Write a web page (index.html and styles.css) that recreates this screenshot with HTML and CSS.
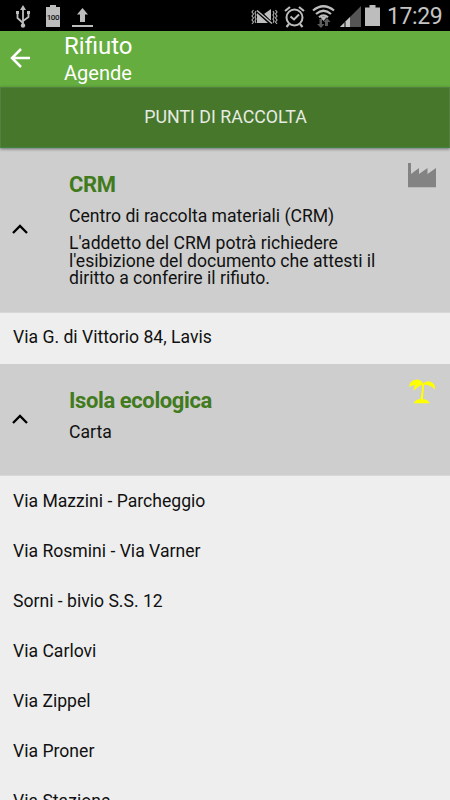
FILE: index.html
```html
<!DOCTYPE html>
<html lang="it">
<head>
<meta charset="utf-8">
<title>Rifiuto - Agende</title>
<link rel="stylesheet" href="styles.css">
</head>
<body>
<div class="screen">
  <div class="status">
    <svg class="usb" width="16" height="24" viewBox="0 0 16 24" fill="none" stroke="#bdbdbd" stroke-width="1.800"><path d="M8 3v19M2.500 8v5L8 18M13.500 8v4L8 16"/><path d="M8 0l3 5H5zM1 6h3v3H1zM12 6h3v3h-3z" fill="#bdbdbd" stroke="none"/><circle cx="8" cy="20.500" r="2.200" fill="#bdbdbd" stroke="none"/></svg>
    <div class="level"><span>100</span></div>
    <svg class="upload" width="22" height="20" viewBox="0 0 22 20" fill="#bdbdbd"><path d="M10.500 0L16 6.500h-3V14H8V6.500H5zM0 17h21v2H0z"/></svg>
    <svg class="mute" width="27" height="18" viewBox="0 0 27 18"><path d="M2.500 2l-1.500 2 1.500 2L1 8l1.500 2L1 12l1.500 2L1 16M5 3L4 5l1 2-1 2 1 2-1 2 1 2M22 3l1 2-1 2 1 2-1 2 1 2-1 2M24.500 2l1.500 2-1.500 2L26 8l-1.500 2 1.500 2-1.500 2 1.500 2" fill="none" stroke="#a8a8a8" stroke-width="1.200"/><path d="M6 5l11 10H6zM13 6l7-5v13z" fill="#bdbdbd"/><path d="M6 1.500l15 14" stroke="#000" stroke-width="3"/><path d="M6 2.500l15 13" stroke="#bdbdbd" stroke-width="1.500"/></svg>
    <svg class="alarm" width="21" height="22" viewBox="0 0 21 22" fill="none" stroke="#bdbdbd"><circle cx="10.500" cy="11.500" r="8" stroke-width="2"/><path d="M6.500 10.500l3.500 3 5-5" stroke-width="2"/><path d="M1 5l5-4M20 5l-5-4M5 18l-2.500 3M16 18l2.500 3" stroke-width="2.200"/></svg>
    <svg class="wifi" width="24" height="23" viewBox="0 0 24 23" fill="none" stroke="#bdbdbd" stroke-width="2.200"><path d="M1 5.500q10.500-8.500 21 0M4 9q7.500-6.500 15 0M7 12.300q4.500-4 9 0"/><path d="M8.500 12.500q3-2 6 0l-3 3.500z" fill="#bdbdbd" stroke="none"/><path d="M7.500 14v5H5l4 4 3.500-4H10v-5zM13 21v-4h-1.500l3.500-4 3.500 4H16v4z" fill="#5b5b5b" stroke="none"/></svg>
    <svg class="signal" width="21" height="21" viewBox="0 0 21 21"><path d="M0 21L21 0v21z" fill="#555"/><path d="M0 21l10-10v10z" fill="#c4c4c4"/><path d="M5 16v5" stroke="#000"/></svg>
    <svg class="cell" width="15" height="21" viewBox="0 0 15 21"><path d="M0 2.500h4.500V0h6v2.500H15V21H0z" fill="#bdbdbd"/></svg>
    <span class="clock">17:29</span>
  </div>
  <header class="bar">
    <svg class="back" width="20" height="20" viewBox="0 0 20 20" fill="none" stroke="#fff" stroke-width="2.500"><path d="M11 1L2 10l9 9M2 10h18"/></svg>
    <div class="titles"><h1>Rifiuto</h1><p>Agende</p></div>
  </header>
  <div class="action">PUNTI DI RACCOLTA</div>
  <section class="group first">
    <svg class="chevron" width="16" height="10" viewBox="0 0 16 10"><path d="M1 9l7-7 7 7" fill="none" stroke="#000" stroke-width="2.300"/></svg>
    <div class="info">
      <h2>CRM</h2>
      <p class="kind">Centro di raccolta materiali (CRM)</p>
      <p class="note">L'addetto del CRM potrà richiedere<br>l'esibizione del documento che attesti il<br>diritto a conferire il rifiuto.</p>
    </div>
    <svg class="factory" width="29" height="25" viewBox="0 0 29 25"><path d="M0 0h3v11l8-6v6l8.500-6v6L28 5v19.300H0z" fill="#838383"/></svg>
  </section>
  <div class="row single">Via G. di Vittorio 84, Lavis</div>
  <section class="group second">
    <svg class="chevron" width="16" height="10" viewBox="0 0 16 10"><path d="M1 9l7-7 7 7" fill="none" stroke="#000" stroke-width="2.300"/></svg>
    <div class="info">
      <h2>Isola ecologica</h2>
      <p class="kind">Carta</p>
    </div>
    <svg class="palm" width="27" height="26" viewBox="0 0 27 26" fill="#ff0"><path d="M14.500 4.500C12 .5 8.500-.2 5.500 1 2 2 0 5 .3 8.300Q3 6 6.500 6.300 4 8.500 4.800 11.800 8.500 7.200 13.400 5.800z"/><path d="M14.500 4.200Q18 1.600 21.500 2.700 26.500 4.500 26 10.500 22 6 15 5.600z"/><path d="M13.200 5h2L13.800 20.500h-2.500Q13 13 13.200 5z"/><path d="M4.500 24.300Q6.500 20 12.500 20t8.500 4.300z"/></svg>
  </section>
  <div class="list">
    <div class="row">Via Mazzini - Parcheggio</div>
    <div class="row">Via Rosmini - Via Varner</div>
    <div class="row">Sorni - bivio S.S. 12</div>
    <div class="row">Via Carlovi</div>
    <div class="row">Via Zippel</div>
    <div class="row">Via Proner</div>
    <div class="row">Via Stazione</div>
  </div>
</div>
</body>
</html>
```
FILE: styles.css
```css
* { box-sizing: border-box; }
body, h1, h2, p { margin: 0; font-weight: 400; }
body { font-family: Roboto, "Noto Sans", sans-serif; color: #111; background: #eee; overflow: hidden; }
svg { display: block; flex: none; }
.screen { width: 450px; height: 800px; overflow: hidden; display: flex; flex-direction: column; }
.screen > * { flex: none; }
.status { height: 31px; background: #000; display: flex; align-items: flex-start; padding-left: 15px; }
.usb { margin-top: 5px; }
.level { width: 14px; height: 20px; margin: 7px 0 0 15px; background: #bdbdbd; position: relative; display: flex; align-items: center; justify-content: center; font-size: 8px; letter-spacing: -.3px; font-weight: 500; color: #111; }
.level::before { content: ""; position: absolute; top: -2px; left: 4px; width: 6px; height: 2px; background: #bdbdbd; }
.upload { margin: 8px 0 0 12px; }
.mute { margin: 8px 0 0 157px; }
.alarm { margin: 6px 0 0 6px; }
.wifi { margin: 5px 0 0 7px; }
.signal { margin: 6px 0 0 4px; }
.cell { margin: 5px 0 0 4px; }
.clock { margin-left: 7px; font-size: 23px; line-height: 33px; color: #c4c4c4; letter-spacing: -.4px; white-space: nowrap; }
.bar { height: 56px; background: #64ad3e; display: flex; color: #fff; padding-left: 10px; }
.back { margin-top: 17px; }
.titles { margin-left: 34px; }
.titles h1 { font-size: 24px; line-height: 28px; margin-top: 1px; }
.titles p { font-size: 20px; line-height: 26px; }
.action { height: 61px; background: #46772b; border: 1px solid #568043; border-bottom-color: #3e8444; color: #e6ebe3; display: flex; align-items: center; justify-content: center; font-size: 17.8px; padding: 0 0 2px 1px; box-shadow: 0 1px 3px #0007; position: relative; }
.group { background: #cecece; display: flex; border-bottom: 1px solid #d8d8d8; }
.first { height: 165px; }
.second { height: 112px; }
.chevron { margin-left: 12px; }
.first .chevron { margin-top: 76px; }
.second .chevron { margin-top: 50px; }
.info { margin-left: 41px; width: 338px; white-space: nowrap; }
.info h2 { font-size: 22px; line-height: 26px; font-weight: 700; letter-spacing: -.4px; color: #417b1d; margin-top: 24px; }
.kind { font-size: 17.6px; line-height: 21px; margin-top: 8px; }
.note { font-size: 17.6px; line-height: 17.6px; margin-top: 8px; }
.factory { margin-top: 15px; margin-left: 1px; }
.palm { margin-top: 15px; margin-left: 2px; }
.row { height: 50px; padding-left: 13px; line-height: 51px; font-size: 17.6px; white-space: nowrap; }
.single { height: 51px; line-height: 48px; }
```
